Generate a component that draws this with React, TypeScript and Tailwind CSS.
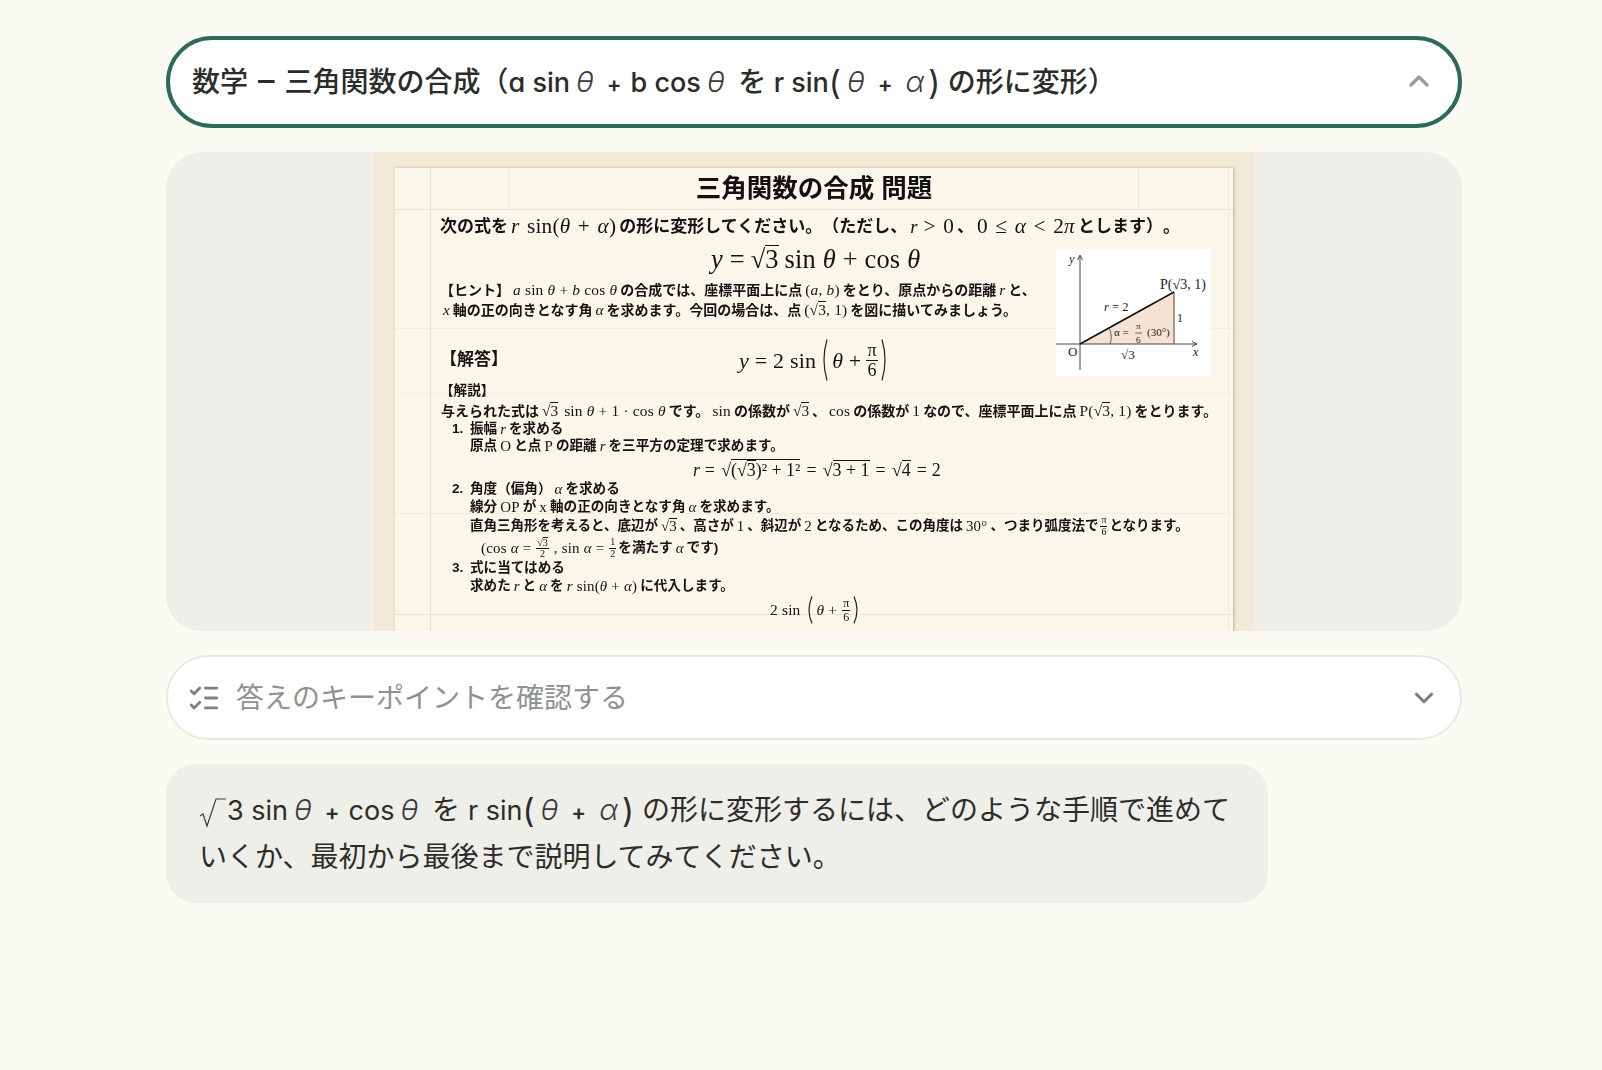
import { ChevronDown, ChevronUp, ListChecks } from 'lucide-react'
import type { ReactNode } from 'react'

const serif = "font-['Liberation_Serif','Noto_Sans_CJK_JP',serif]"

function M({ children }: { children: ReactNode }) {
    return <span className={`${serif} italic font-normal text-[1.1em] mx-[3px]`}>{children}</span>
}

function R({ children, big = false }: { children: ReactNode; big?: boolean }) {
    return <span className={`${serif} font-normal ${big ? 'text-[1.25em] [word-spacing:2px]' : 'text-[1.1em]'} tracking-[0.2px] mx-[3px]`}>{children}</span>
}

function Sqrt({ children, inner = false }: { children: ReactNode; inner?: boolean }) {
    return (
        <span className={`${serif} inline-flex items-baseline font-normal ${inner ? '' : 'text-[1.1em] mx-[3px]'}`}>
            <span>√</span>
            <span className="border-t border-current leading-[1.05]">{children}</span>
        </span>
    )
}

function Frac({ top, bottom, size = 'text-[10px]' }: { top: ReactNode; bottom: ReactNode; size?: string }) {
    return (
        <span className={`${serif} ${size} inline-flex flex-col items-center align-middle font-normal leading-[1.05] mx-[2px]`}>
            <span className="border-b border-current px-[1px]">{top}</span>
            <span>{bottom}</span>
        </span>
    )
}

function Paren({ h, flip = false }: { h: number; flip?: boolean }) {
    return (
        <svg width="8" height={h} viewBox={`0 0 8 ${h}`} className={`mx-[1px] ${flip ? '-scale-x-100' : ''}`}>
            <path d={`M7 0.5 Q1 ${h / 2} 7 ${h - 0.5}`} stroke="#222" strokeWidth="1.2" fill="none" />
        </svg>
    )
}

function Diagram() {
    return (
        <svg width="155" height="127" viewBox="0 0 155 127" className="absolute left-[661px] top-[81px] bg-white font-normal">
            <path d="M24 95 L118 43 L118 95 Z" fill="#f5e2d3" />
            <path d="M24 121 V7 M21.5 11 L24 6 L26.5 11" stroke="#444" strokeWidth="1" fill="none" />
            <path d="M0 95 H141 M136 92.5 L141 95 L136 97.5" stroke="#444" strokeWidth="1" fill="none" />
            <path d="M118 43 V95" stroke="#444" strokeWidth="1" />
            <path d="M24 95 L118 43" stroke="#111" strokeWidth="1.6" />
            <path d="M53 79 Q57 87 54 95" stroke="#444" strokeWidth="0.8" fill="none" />
            <g fontFamily="Liberation Serif" fill="#222" fontWeight="400">
                <text x="13" y="14" fontSize="12" fontStyle="italic">y</text>
                <text x="104" y="40" fontSize="14">P(√3, 1)</text>
                <text x="48" y="62" fontSize="12.5"><tspan fontStyle="italic">r</tspan> = 2</text>
                <text x="121" y="73" fontSize="12">1</text>
                <text x="58" y="87" fontSize="11">α =</text>
                <text x="80" y="80" fontSize="9">π</text>
                <path d="M79 84 H86" stroke="#333" strokeWidth="0.7" />
                <text x="80" y="94" fontSize="9">6</text>
                <text x="91" y="87" fontSize="11">(30°)</text>
                <text x="12" y="107" fontSize="13">O</text>
                <text x="65" y="110" fontSize="13">√3</text>
                <text x="137" y="107" fontSize="12" fontStyle="italic">x</text>
            </g>
        </svg>
    )
}

function Worksheet() {
    return (
        <div className="w-[880px] h-full bg-[#f2e9d8] overflow-hidden shrink-0 pl-[21px] pt-[16px]">
            <div className="relative w-[838px] h-[600px] bg-[#fbf6ea] shadow-[1px_0_3px_rgba(90,70,40,0.35)] pl-[45px] text-[13.6px] font-bold text-[#141414] whitespace-nowrap font-['Liberation_Sans','Noto_Sans_CJK_JP',sans-serif] blur-[0.3px]">
                <div className="absolute left-[35px] top-0 bottom-0 w-px bg-[#e9e3d6]" />
                <div className="absolute left-[114px] top-0 h-[41px] w-px bg-[#f2ecdf]" />
                <div className="absolute left-[743px] top-0 h-[41px] w-px bg-[#e9e3d6]" />
                <div className="absolute left-[833px] top-0 bottom-0 w-px bg-[#f0eadd]" />
                <div className="absolute left-0 right-0 top-[41px] h-px bg-[#e9e3d6]" />
                <div className="absolute left-0 right-0 top-[160px] h-px bg-[#f2ecdf]" />
                <div className="absolute left-0 right-0 top-[225px] h-px bg-[#f4eee2]" />
                <div className="absolute left-0 right-0 top-[345px] h-px bg-[#f2ecdf]" />
                <div className="absolute left-0 right-0 top-[446px] h-px bg-[#e9e3d6]" />
                <Diagram />

                <div className="relative flex flex-col">
                    <div className="h-[41px] flex items-center justify-center -ml-[45px] text-[25.5px] font-bold text-[#111]">
                        三角関数の合成 問題
                    </div>
                    <div className="h-[36px] flex items-center text-[17px]">
                        次の式を<R big><i>r</i> sin(<i>θ</i> + <i>α</i>)</R>の形に変形してください。（ただし、<M>r</M><R big>&gt; 0</R>、<R big>0 ≤ <i>α</i> &lt; 2<i>π</i></R>とします）。
                    </div>
                    <div className="h-[30px] flex items-center pl-[268px] text-[24px]">
                        <R><i>y</i> = </R><Sqrt>3</Sqrt><R> sin <i>θ</i> + cos <i>θ</i></R>
                    </div>
                    <div className="h-[20px] mt-[5px] flex items-center text-[14px]">
                        【ヒント】<R><i>a</i> sin <i>θ</i> + <i>b</i> cos <i>θ</i></R>の合成では、座標平面上に点<R>(<i>a</i>, <i>b</i>)</R>をとり、原点からの距離<M>r</M>と、
                    </div>
                    <div className="h-[20px] flex items-center text-[14px]">
                        <M>x</M>軸の正の向きとなす角<M>α</M>を求めます。今回の場合は、点<R>(<Sqrt inner>3</Sqrt>, 1)</R>を図に描いてみましょう。
                    </div>
                    <div className="h-[40px] mt-[20px] flex items-center text-[17px]">
                        【解答】
                        <span className="ml-[228px] text-[20px] flex items-center">
                            <R><i>y</i> = 2 sin</R>
                            <Paren h={42} />
                            <R><i>θ</i> + </R>
                            <Frac top="π" bottom="6" size="text-[18px]" />
                            <Paren h={42} flip />
                        </span>
                    </div>
                    <div className="h-[20px] mt-[1px] flex items-center">【解説】</div>
                    <div className="h-[18px] mt-[1px] flex items-center pl-[1px] text-[14px]">
                        与えられた式は<Sqrt>3</Sqrt><R> sin <i>θ</i> + 1 · cos <i>θ</i></R>です。<R>sin</R>の係数が<Sqrt>3</Sqrt>、<R>cos</R>の係数が<R>1</R>なので、座標平面上に点<R>P(<Sqrt inner>3</Sqrt>, 1)</R>をとります。
                    </div>
                    <div className="h-[16px] mt-[1px] flex items-center pl-[12px]">
                        <span className="w-[18px]">1.</span>振幅<M>r</M>を求める
                    </div>
                    <div className="h-[18px] flex items-center pl-[30px]">
                        原点<R>O</R>と点<R>P</R>の距離<M>r</M>を三平方の定理で求めます。
                    </div>
                    <div className="h-[30px] flex items-center pl-[250px] text-[16.3px]">
                        <R><i>r</i> = </R><Sqrt>(<Sqrt inner>3</Sqrt>)² + 1²</Sqrt><R> = </R><Sqrt>3 + 1</Sqrt><R> = </R><Sqrt>4</Sqrt><R> = 2</R>
                    </div>
                    <div className="h-[12px] -mt-[2px] flex items-center pl-[12px]">
                        <span className="w-[18px]">2.</span>角度（偏角）<M>α</M>を求める
                    </div>
                    <div className="h-[25px] flex items-center pl-[30px]">
                        線分<R>OP</R>が<R>x</R>軸の正の向きとなす角<M>α</M>を求めます。
                    </div>
                    <div className="h-[12px] flex items-center pl-[30px] text-[13.5px]">
                        直角三角形を考えると、底辺が<Sqrt>3</Sqrt>、高さが<R>1</R>、斜辺が<R>2</R>となるため、この角度は<R>30°</R>、つまり弧度法で<Frac top="π" bottom="6" />となります。
                    </div>
                    <div className="h-[32px] flex items-center pl-[38px]">
                        <R>(cos <i>α</i> = </R><Frac top={<Sqrt inner>3</Sqrt>} bottom="2" /><R>, sin <i>α</i> = </R><Frac top="1" bottom="2" />を満たす<M>α</M>です)
                    </div>
                    <div className="h-[8px] flex items-center pl-[12px]">
                        <span className="w-[18px]">3.</span>式に当てはめる
                    </div>
                    <div className="h-[28px] flex items-center pl-[30px]">
                        求めた<M>r</M>と<M>α</M>を<R><i>r</i> sin(<i>θ</i> + <i>α</i>)</R>に代入します。
                    </div>
                    <div className="h-[20px] flex items-center pl-[327px] text-[14px]">
                        <R>2 sin</R>
                        <Paren h={28} />
                        <R><i>θ</i> + </R>
                        <Frac top="π" bottom="6" size="text-[12px]" />
                        <Paren h={28} flip />
                    </div>
                </div>
            </div>
        </div>
    )
}

function La({ children }: { children: ReactNode }) {
    return <span className="text-[27px]">{children}</span>
}

function Th() {
    return <span className="italic font-light text-[29px] leading-none mx-[6px] text-[#3a3a38]">θ</span>
}

function Al() {
    return <span className="italic font-light text-[29px] leading-none ml-[4px] mr-[4px] text-[#3a3a38]">α</span>
}

function Plus() {
    return <span className="text-[22px] font-semibold leading-none ml-[7px] mr-[9px]">+</span>
}

function Pn({ children }: { children: ReactNode }) {
    return <span className="text-[33px] font-normal leading-none align-[-2px]">{children}</span>
}

export default function App() {
    return (
        <div className="min-h-screen bg-[#fbfbf3] pl-[166px] pt-[36px] font-['Inter','Noto_Sans_CJK_JP',sans-serif] [font-feature-settings:'cv11'] [text-spacing-trim:space-all] text-[28px] text-[#2c2c2a]">
            <div className="w-[1296px] flex flex-col gap-[24px]">
                <div className="h-[92px] flex items-center justify-between rounded-full border-[4px] border-[#2d6a5a] bg-white pl-[22px] pr-[23px] font-medium">
                    <div className="whitespace-nowrap">
                        数学<span className="mx-[10px] text-[33px] leading-none">–</span>三角関数の合成（<La>a sin</La><Th /><Plus /><La>b cos</La><Th /> を <La>r sin</La><Pn>(</Pn><Th /><Plus /><Al /><Pn>)</Pn> の形に変形）
                    </div>
                    <ChevronUp size={32} strokeWidth={2.4} className="text-[#9b9c9a] -mt-[3px]" />
                </div>

                <div className="h-[479px] flex justify-center rounded-[36px] bg-[#efefe9] overflow-hidden">
                    <Worksheet />
                </div>

                <div className="h-[85px] flex items-center justify-between rounded-full border-2 border-[#e9e9e3] bg-white pl-[19px] pr-[21px]">
                    <div className="flex items-center gap-[15px] text-[#8f9190] whitespace-nowrap">
                        <ListChecks size={34} strokeWidth={2} className="text-[#7f8180]" />
                        答えのキーポイントを確認する
                    </div>
                    <ChevronDown size={30} strokeWidth={2.5} className="text-[#7d7f7e]" />
                </div>

                <div className="w-[1102px] h-[139px] rounded-[30px] bg-[#efefe9] pl-[33px] pt-[23px] leading-[46px] whitespace-nowrap">
                    <svg width="28" height="32" viewBox="0 0 28 32" className="inline-block align-[-8px]">
                        <path d="M1 20 L4 18 L8 30 L17 3 H27" stroke="#3a3a38" strokeWidth="1.2" fill="none" />
                    </svg>
                    <La>3 sin</La><Th /><Plus /><La>cos</La><Th /> を <La>r sin</La><Pn>(</Pn><Th /><Plus /><Al /><Pn>)</Pn> の形に変形するには、どのような手順で進めて
                    <br />
                    いくか、最初から最後まで説明してみてください。
                </div>
            </div>
        </div>
    )
}
